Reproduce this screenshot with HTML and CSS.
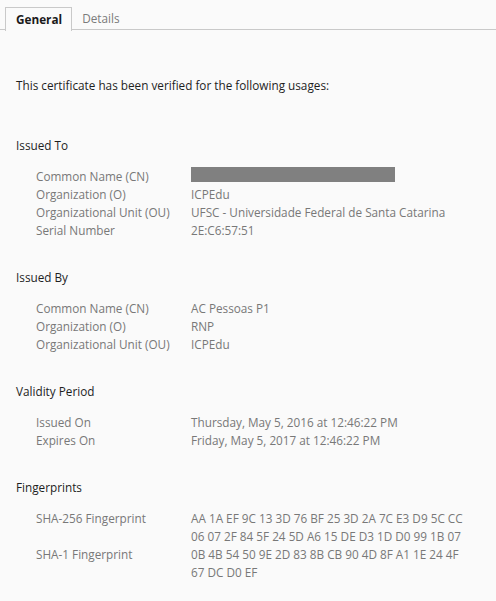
FILE: index.html
```html
<!DOCTYPE html>
<html>
<head>
<meta charset="utf-8">
<link rel="stylesheet" href="styles.css">
</head>
<body>
<div class="tabs">
  <div class="tab active">General</div>
  <div class="tab">Details</div>
</div>
<div class="content">
  <p class="intro">This certificate has been verified for the following usages:</p>

  <section class="section">
    <h2 class="heading">Issued To</h2>
    <div class="rows">
      <div class="label">Common Name (CN)</div><div class="value"><span class="redact"></span></div>
      <div class="label">Organization (O)</div><div class="value">ICPEdu</div>
      <div class="label">Organizational Unit (OU)</div><div class="value">UFSC - Universidade Federal de Santa Catarina</div>
      <div class="label">Serial Number</div><div class="value">2E:C6:57:51</div>
    </div>
  </section>

  <section class="section">
    <h2 class="heading">Issued By</h2>
    <div class="rows">
      <div class="label">Common Name (CN)</div><div class="value">AC Pessoas P1</div>
      <div class="label">Organization (O)</div><div class="value">RNP</div>
      <div class="label">Organizational Unit (OU)</div><div class="value">ICPEdu</div>
    </div>
  </section>

  <section class="section">
    <h2 class="heading">Validity Period</h2>
    <div class="rows">
      <div class="label">Issued On</div><div class="value">Thursday, May 5, 2016 at 12:46:22 PM</div>
      <div class="label">Expires On</div><div class="value">Friday, May 5, 2017 at 12:46:22 PM</div>
    </div>
  </section>

  <section class="section">
    <h2 class="heading">Fingerprints</h2>
    <div class="rows">
      <div class="label">SHA-256 Fingerprint</div><div class="value">AA 1A EF 9C 13 3D 76 BF 25 3D 2A 7C E3 D9 5C CC<br>06 07 2F 84 5F 24 5D A6 15 DE D3 1D D0 99 1B 07</div>
      <div class="label">SHA-1 Fingerprint</div><div class="value">0B 4B 54 50 9E 2D 83 8B CB 90 4D 8F A1 1E 24 4F<br>67 DC D0 EF</div>
    </div>
  </section>
</div>
</body>
</html>
```

FILE: styles.css
```css
html, body {
  margin: 0;
  padding: 0;
}
body {
  background: #fafafa;
  font-family: "Open Sans", "DejaVu Sans", sans-serif;
  font-size: 11.75px;
  color: #3c3c3c;
  width: 496px;
  height: 601px;
  overflow: hidden;
}
.tabs {
  display: flex;
  padding: 7px 0 0 5px;
  border-bottom: 1px solid #c9c9c9;
  height: 22px;
}
.tab {
  height: 22px;
  line-height: 23px;
  padding: 0 10px;
  color: #7b7b7b;
}
.tab.active {
  border: 1px solid #c9c9c9;
  border-bottom: none;
  background: #fafafa;
  color: #1a1a1a;
  font-weight: bold;
  padding: 0 9px 0 10px;
  height: 23px;
  margin-bottom: -1px;
}
.content {
  padding: 0 16px;
}
.intro {
  margin: 46px 0 0;
  line-height: 18px;
  color: #1e1e1e;
}
.section {
  margin-top: 42px;
}
.section + .section {
  margin-top: 29px;
}
.heading {
  margin: 0;
  font-size: 11.75px;
  font-weight: normal;
  line-height: 18px;
  color: #1e1e1e;
}
.rows {
  display: grid;
  grid-template-columns: 155px 1fr;
  margin: 13px 0 0 20px;
  line-height: 18px;
  color: #787878;
}
.redact {
  display: block;
  width: 204px;
  height: 15px;
  background: #808080;
}
```
